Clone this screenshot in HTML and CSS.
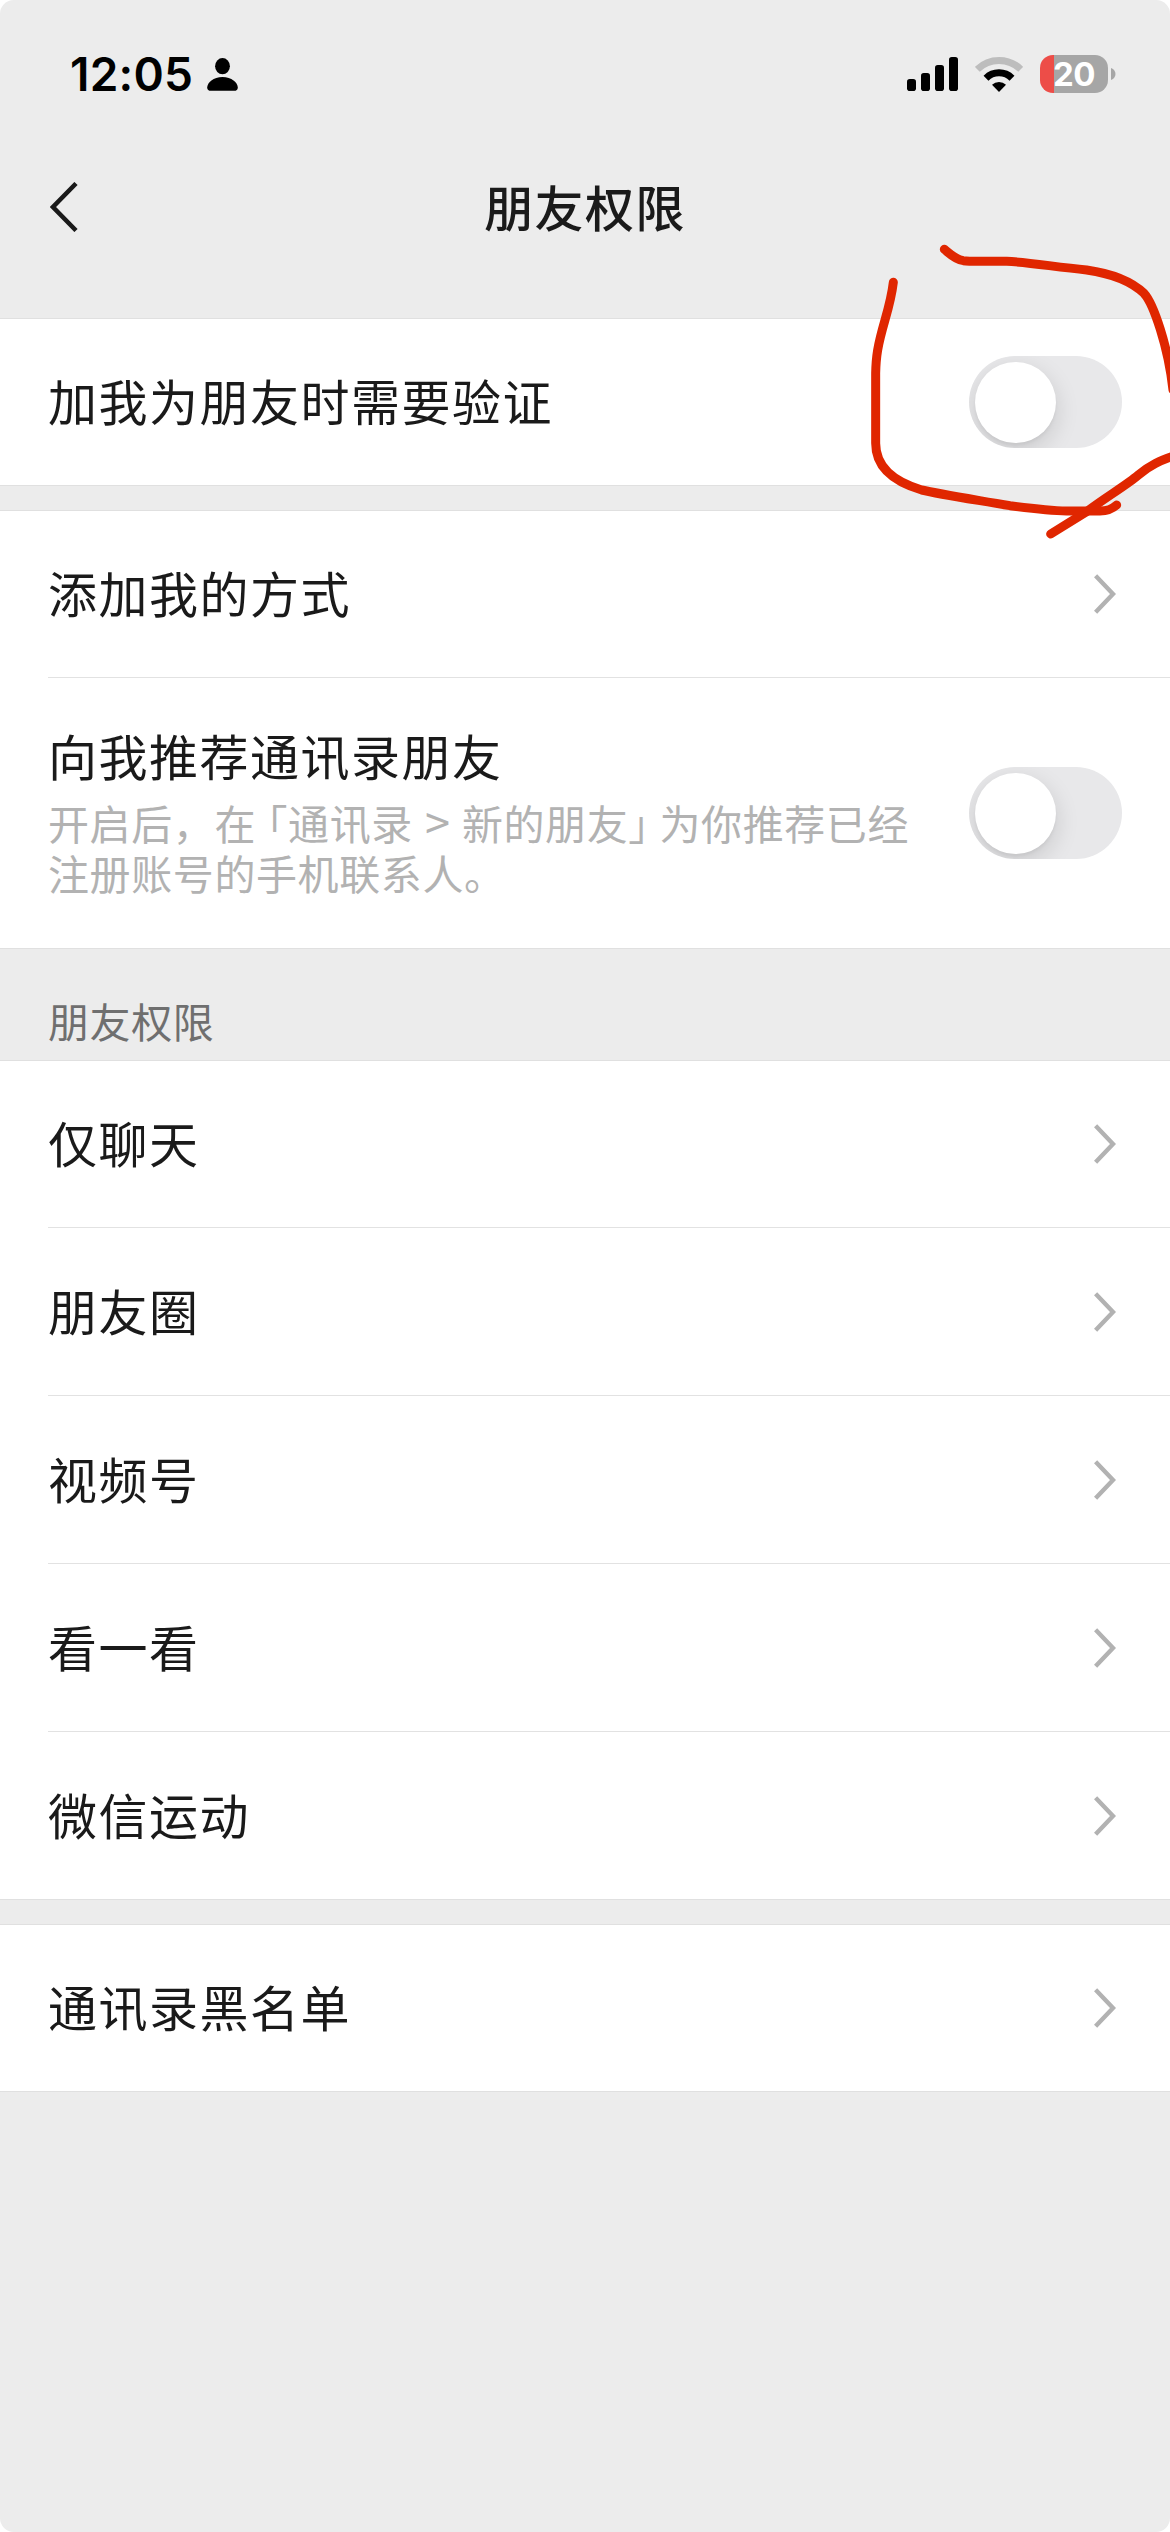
FILE: index.html
```html
<!DOCTYPE html>
<html lang="zh-CN">
<head>
<meta charset="utf-8">
<title>朋友权限</title>
<link rel="stylesheet" href="styles.css">
</head>
<body>
<svg class="defs" width="0" height="0" aria-hidden="true">
  <symbol id="chevron" viewBox="0 0 22 40"><path d="M1.600 1.800 19 20 1.600 38.200" fill="none" stroke="#b2b2b2" stroke-width="4.400"/></symbol>
</svg>
<main class="screen">
  <header class="status">
    <div class="status-left">
      <span class="time">12:05</span>
      <svg class="person" viewBox="0 0 31 33"><ellipse cx="15.500" cy="8.200" rx="7.400" ry="8.100"/><path d="M4 32.800C1.500 32.800.2 31.600.2 29.400.2 24.800 6.500 19 15.500 19s15.300 5.800 15.300 10.400c0 2.200-1.300 3.400-3.800 3.400Z"/></svg>
    </div>
    <div class="status-right">
      <svg class="signal" viewBox="0 0 52 34"><rect x="0" y="22" width="9" height="12" rx="2.800"/><rect x="14" y="16" width="9" height="18" rx="2.800"/><rect x="28" y="8" width="9" height="26" rx="2.800"/><rect x="42" y="0" width="9" height="34" rx="2.800"/></svg>
      <svg class="wifi" viewBox="0 0 48 36"><path d="M2.300 13.300A31 31 0 0 1 45.700 13.300" fill="none" stroke="#bdbdbd" stroke-width="7"/><path d="M11 22.200A18.500 18.500 0 0 1 37 22.200" fill="none" stroke="#000" stroke-width="7"/><path d="M24 36 17 28.800A10 10 0 0 1 31 28.800Z"/></svg>
      <div class="battery"><span class="level">20</span></div>
      <svg class="nub" viewBox="0 0 5 12"><path d="M0 0C3 1 4.500 3.500 4.500 6S3 11 0 12Z" fill="#a6a6a6"/></svg>
    </div>
  </header>
  <nav class="navbar">
    <svg class="back" viewBox="0 0 28 50"><path d="M26 1.500 3 25 26 48.500" fill="none" stroke="#1a1a1a" stroke-width="4.500"/></svg>
    <h1 class="title">朋友权限</h1>
  </nav>

  <section class="group">
    <div class="row"><span class="label">加我为朋友时需要验证</span><span class="toggle"></span></div>
  </section>

  <section class="group">
    <div class="row"><span class="label">添加我的方式</span><svg class="chevron"><use href="#chevron"/></svg></div>
    <div class="row row-tall">
      <div class="text">
        <span class="label">向我推荐通讯录朋友</span>
        <p class="hint">开启后，在<span class="open">「</span>通讯录<span class="gt">&gt;</span>新的朋友<span class="close">」</span>为你推荐已经<br>注册账号的手机联系人。</p>
      </div>
      <span class="toggle"></span>
    </div>
  </section>

  <h2 class="section-title">朋友权限</h2>
  <section class="group">
    <div class="row"><span class="label">仅聊天</span><svg class="chevron"><use href="#chevron"/></svg></div>
    <div class="row"><span class="label">朋友圈</span><svg class="chevron"><use href="#chevron"/></svg></div>
    <div class="row"><span class="label">视频号</span><svg class="chevron"><use href="#chevron"/></svg></div>
    <div class="row"><span class="label">看一看</span><svg class="chevron"><use href="#chevron"/></svg></div>
    <div class="row"><span class="label">微信运动</span><svg class="chevron"><use href="#chevron"/></svg></div>
  </section>

  <section class="group">
    <div class="row"><span class="label">通讯录黑名单</span><svg class="chevron"><use href="#chevron"/></svg></div>
  </section>

  <svg class="marker" viewBox="0 0 990 960">
    <path d="M313 58C330 72 345 88 370 92C400 96 450 92 500 94C560 96 640 110 740 120C810 130 870 150 912 190C940 220 985 350 999 480"/>
    <path d="M1004 677C960 692 930 705 895 735C860 765 800 800 740 845L632 912"/>
    <path d="M160 157C155 200 148 225 135 270C112 350 108 380 107 430L107 640C107 710 160 755 245 780C300 793 400 808 510 827C580 836 640 842 680 843L780 843C805 843 820 834 830 825"/>
  </svg>
</main>
</body>
</html>
```
FILE: styles.css
```css
body {
  margin: 0;
  background: #fff;
  font-family: "Noto Sans CJK SC", sans-serif;
  color: #1a1a1a;
}

.defs { position: absolute; }

svg { display: block; flex: none; }

.screen {
  position: relative;
  width: 1170px;
  height: 2532px;
  overflow: hidden;
  border-radius: 14px;
  background: #ececec;
}

.status {
  display: flex;
  justify-content: space-between;
  align-items: center;
  box-sizing: border-box;
  height: 150px;
  padding: 0 54px 2px 70px;
}

.status-left,
.status-right { display: flex; align-items: center; }

.time {
  font: 600 46px/60px Inter, sans-serif;
  letter-spacing: 0.2px;
  color: #000;
}

.person { width: 31px; height: 33px; margin-left: 14px; }
.signal { width: 52px; height: 34px; margin-right: 16px; }
.wifi { width: 48px; height: 36px; margin-right: 17px; }

.battery {
  display: flex;
  align-items: center;
  justify-content: center;
  width: 68px;
  height: 38px;
  margin-right: 3px;
  border-radius: 13px;
  background: linear-gradient(to right, #ed4d48 14px, #a6a6a6 14px);
}

.level {
  font: 700 33px/38px Inter, sans-serif;
  letter-spacing: -0.5px;
  color: #fff;
}

.nub { width: 5px; height: 12px; }

.navbar {
  display: grid;
  grid-template-columns: 120px 1fr 120px;
  align-items: center;
  height: 114px;
  margin-bottom: 54px;
}

.back { width: 28px; height: 50px; margin-left: 50px; }

.title {
  margin: 0;
  padding-bottom: 2px;
  text-align: center;
  font-size: 49px;
  font-weight: 500;
  line-height: 68px;
  letter-spacing: 1.4px;
}

.group {
  margin-bottom: 24px;
  border-top: 1px solid #e0e0e0;
  border-bottom: 1px solid #e0e0e0;
  background: #fff;
}

.row {
  display: flex;
  align-items: center;
  justify-content: space-between;
  height: 166px;
  margin-left: 48px;
  padding-right: 48px;
}

.row + .row {
  height: 167px;
  border-top: 1px solid #e2e2e2;
}

.row + .row-tall { height: 270px; }

.label {
  padding-bottom: 4px;
  font-size: 49px;
  line-height: 70px;
  letter-spacing: 1.5px;
}

.text { padding-bottom: 9px; }

.text .label {
  display: block;
  padding-bottom: 0;
}

.hint {
  margin: 7px 0 0;
  color: #b2b2b2;
  font-size: 41px;
  line-height: 50px;
  letter-spacing: 0.6px;
  white-space: nowrap;
}

.open,
.close { font-feature-settings: "halt"; }
.open { margin-left: 11px; }
.close { margin-right: 10px; }

.gt {
  display: inline-block;
  width: 49px;
  font-size: 45px;
  letter-spacing: 0;
  line-height: 40px;
  text-align: center;
}

.chevron { width: 22px; height: 40px; margin-right: 6px; }

.toggle {
  flex: none;
  box-sizing: border-box;
  width: 153px;
  height: 92px;
  padding: 6px;
  border-radius: 46px;
  background: #e8e8ea;
  overflow: hidden;
}

.toggle::before {
  content: "";
  display: block;
  width: 81px;
  height: 81px;
  border-radius: 50%;
  background: #fff;
  box-shadow: 0 8px 24px rgba(0, 0, 0, 0.14), 0 3px 3px rgba(0, 0, 0, 0.04);
}

.section-title {
  box-sizing: border-box;
  height: 111px;
  margin: -24px 0 0;
  padding: 41px 48px 0;
  color: #6f6f6f;
  font-size: 41px;
  font-weight: 400;
  line-height: 60px;
  letter-spacing: 0.6px;
}

.marker {
  position: absolute;
  left: 840px;
  top: 230px;
  width: 330px;
  height: 320px;
  fill: none;
  stroke: #e02600;
  stroke-width: 27;
  stroke-linecap: round;
  stroke-linejoin: round;
}
```
